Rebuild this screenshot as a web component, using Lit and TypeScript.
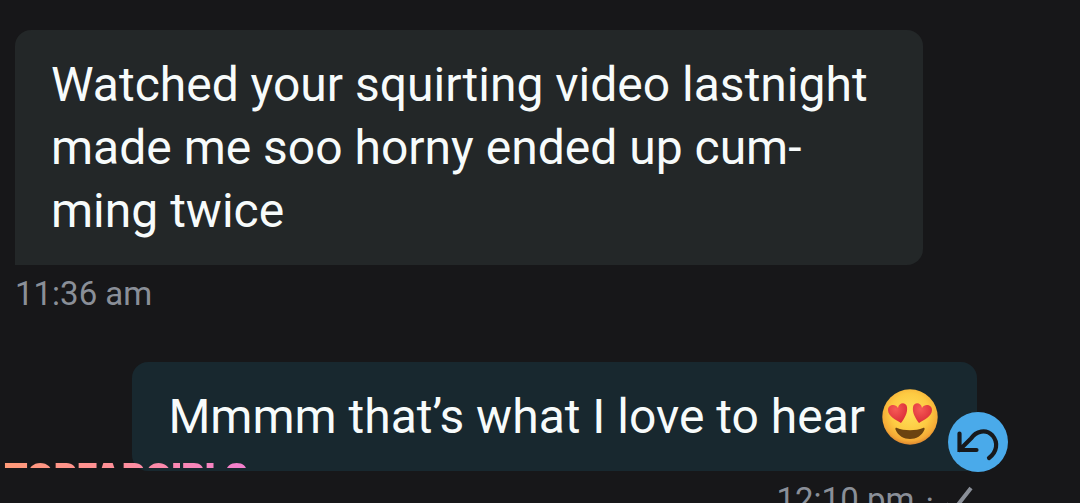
import { LitElement, html, css } from "lit";
import { customElement } from "lit/decorators.js";

@customElement("heart-eyes")
class HeartEyes extends LitElement {
  static styles = css`
    :host { display: inline-block; width: 56px; height: 56px; margin: 0 3px 0 5px; vertical-align: -12px; }
    .face { display: block; width: 100%; height: 100%; }
  `;
  render() {
    return html`<svg class="face" viewBox="0 0 56 56" role="img" aria-label="Smiling face with heart eyes">
      <defs>
        <radialGradient id="skin" cx=".5" cy=".42" r=".58">
          <stop offset="0" stop-color="#ffe05a" />
          <stop offset=".6" stop-color="#fdca42" />
          <stop offset=".88" stop-color="#f5aa36" />
          <stop offset="1" stop-color="#dc8730" />
        </radialGradient>
        <radialGradient id="heart" cx=".4" cy=".3" r=".75">
          <stop offset="0" stop-color="#f65a55" />
          <stop offset="1" stop-color="#d92a36" />
        </radialGradient>
      </defs>
      <circle cx="28" cy="28" r="27.7" fill="url(#skin)" />
      <path fill="url(#heart)" d="M19 34C14 31 6 27 6 21c0-5 7-7 10-2 1-6 8-6 9-1 1 6-3 12-6 16z" />
      <path fill="url(#heart)" d="M37 34c5-3 13-7 13-13 0-5-7-7-10-2-1-6-8-6-9-1-1 6 3 12 6 16z" />
      <path fill="#6b4310" d="M15 39c7 3 19 3 26 0 1-.5 2 .2 1.500 1.500C40 47 34 50 28 50s-12-3-14.500-9.500C13 39.200 14 38.500 15 39z" />
    </svg>`;
  }
}

@customElement("app-root")
class AppRoot extends LitElement {
  static styles = css`
    :host {
      display: block;
      position: relative;
      box-sizing: border-box;
      height: 100vh;
      overflow: hidden;
      padding: 30px 15px 0;
      background: #171719;
      color: #f7fbfb;
      font-family: Roboto, sans-serif;
    }
    .thread { display: flex; flex-direction: column; gap: 48px; }
    .message { display: flex; flex-direction: column; align-items: flex-start; }
    .sent { align-items: flex-end; padding-right: 88px; }
    .bubble {
      position: relative;
      box-sizing: border-box;
      margin: 0;
      max-width: 908px;
      padding: 23px 36px;
      border-radius: 16px 16px 16px 0;
      background: #232728;
      font-size: 48px;
      line-height: 63px;
    }
    .sent .bubble { border-radius: 16px 16px 0 16px; background: #18282f; }
    .meta {
      display: flex;
      align-items: center;
      gap: 11px;
      margin-top: 8px;
      font-size: 33px;
      line-height: 41px;
      color: #8a8f98;
    }
    .tick { display: block; width: 32px; height: 32px; }
    .undo {
      position: absolute;
      right: -31px;
      bottom: -1px;
      width: 60px;
      height: 60px;
      padding: 0;
      border: 0;
      border-radius: 50%;
      background: #4aaaea;
    }
    .arrow { display: block; width: 60px; height: 60px; }
    .brand {
      position: absolute;
      left: 4px;
      top: 458px;
      height: 10px;
      overflow: hidden;
      font-family: Inter, sans-serif;
      font-size: 35px;
      font-weight: 900;
      line-height: 36px;
      color: transparent;
      background: linear-gradient(90deg, #ff9a78, #ff8f98 45%, #f37fd0);
      -webkit-background-clip: text;
      background-clip: text;
    }
  `;
  render() {
    return html`
      <main class="thread">
        <article class="message">
          <p class="bubble">Watched your squirting video lastnight made me soo horny ended up cum&shy;ming twice</p>
          <time class="meta">11:36 am</time>
        </article>
        <article class="message sent">
          <div class="bubble">
            Mmmm that’s what I love to hear <heart-eyes></heart-eyes>
            <button class="undo" aria-label="Undo">
              <svg class="arrow" viewBox="0 0 60 60" fill="none" stroke="#17191c" stroke-width="4.200" stroke-linecap="round" stroke-linejoin="miter">
                <path d="M11.500 21.500V38H28.500M11.500 38L23 26.500C28 19 38 16.500 44.500 23.500C50.500 30.500 49 40 41 46" />
              </svg>
            </button>
          </div>
          <div class="meta">
            <time>12:10 pm</time><span>·</span>
            <svg class="tick" viewBox="0 0 32 32" fill="none" stroke="#8a8f98" stroke-width="4" aria-label="Sent">
              <path d="M1 20L8 27L26 4" />
            </svg>
          </div>
        </article>
      </main>
      <div class="brand">TOPFAPGIRLS</div>
    `;
  }
}
